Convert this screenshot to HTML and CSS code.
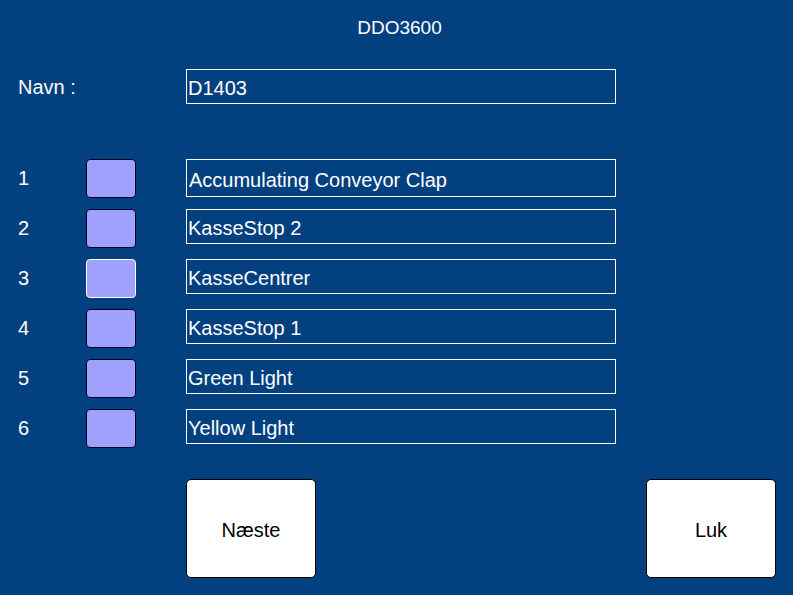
FILE: index.html
```html
<!DOCTYPE html>
<html>
<head>
<meta charset="utf-8">
<link rel="stylesheet" href="styles.css">
</head>
<body>
<div class="screen">
  <div class="title">DDO3600</div>
  <div class="name-row">
    <div class="label">Navn :</div>
    <div class="field field-name">D1403</div>
  </div>
  <div class="rows">
    <div class="num">1</div><div class="swatch"></div><div class="field field-tall">Accumulating Conveyor Clap</div>
    <div class="num">2</div><div class="swatch"></div><div class="field">KasseStop 2</div>
    <div class="num">3</div><div class="swatch swatch-focus"></div><div class="field">KasseCentrer</div>
    <div class="num">4</div><div class="swatch"></div><div class="field">KasseStop 1</div>
    <div class="num">5</div><div class="swatch"></div><div class="field">Green Light</div>
    <div class="num">6</div><div class="swatch"></div><div class="field">Yellow Light</div>
  </div>
  <div class="buttons">
    <div class="btn">Næste</div>
    <div class="btn">Luk</div>
  </div>
</div>
</body>
</html>
```
FILE: styles.css
```css
html, body {
  margin: 0;
  padding: 0;
  background: #02407f;
}
.screen {
  width: 793px;
  height: 595px;
  background: #02407f;
  color: #ffffff;
  font-family: "Liberation Sans", Arial, sans-serif;
  font-size: 20px;
  overflow: hidden;
}
.title {
  height: 56px;
  line-height: 56px;
  text-align: center;
  padding-left: 6px;
  font-size: 19px;
}
.name-row {
  display: grid;
  grid-template-columns: 168px 430px;
  grid-template-rows: 35px;
  padding-left: 18px;
  margin-top: 13px;
  align-items: center;
}
.label {
  line-height: 35px;
  padding-top: 2px;
}
.field {
  box-sizing: border-box;
  border: 1px solid #ffffff;
  height: 35px;
  line-height: 33px;
  padding-top: 2px;
  padding-left: 1px;
  white-space: nowrap;
}
.field-tall {
  height: 38px;
  line-height: 36px;
  padding-left: 2px;
}
.rows {
  display: grid;
  grid-template-columns: 68px 100px 430px;
  grid-auto-rows: 39px;
  row-gap: 11px;
  padding-left: 18px;
  margin-top: 55px;
  align-items: start;
}
.num {
  line-height: 39px;
}
.swatch {
  box-sizing: border-box;
  width: 50px;
  height: 39px;
  background: #a0a0ff;
  border: 1px solid #000020;
  border-radius: 4px;
}
.swatch-focus {
  border-color: #ffffff;
}
.buttons {
  display: flex;
  padding-left: 186px;
  margin-top: 31px;
  gap: 330px;
}
.btn {
  box-sizing: border-box;
  width: 130px;
  height: 99px;
  padding-top: 3px;
  background: #ffffff;
  border: 1px solid #000000;
  border-radius: 5px;
  color: #000000;
  display: flex;
  align-items: center;
  justify-content: center;
}
```
